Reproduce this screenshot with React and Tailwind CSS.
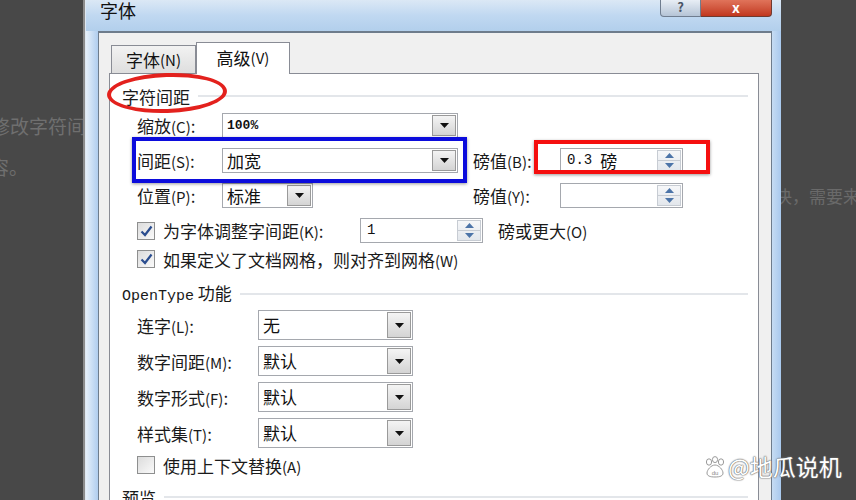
import React from "react";

const CJK = "font-['Noto_Sans_CJK_SC','Noto_Sans',sans-serif]";
const MONO = "font-['Liberation_Mono','DejaVu_Sans_Mono',monospace]";

function DropBtn() {
  return (
    <div className="w-[24px] self-stretch m-px flex items-center justify-center border border-[#9a9a9a] bg-gradient-to-b from-[#f4f4f4] to-[#d4d4d4]">
      <svg width="9" height="5" viewBox="0 0 9 5">
        <path d="M0 0 L9 0 L4.5 5 Z" fill="#111" />
      </svg>
    </div>
  );
}

function Combo({ w, h = 25, text, mono }) {
  return (
    <div className="flex items-stretch bg-white border border-[#a5a8ae] shrink-0" style={{ width: w, height: h }}>
      <div className={`flex-1 flex items-center pl-[4px] text-[#111] ${mono ? MONO + " text-[13px] font-bold" : "text-[17px]"}`}>
        {text}
      </div>
      <DropBtn />
    </div>
  );
}

function SpinBtn() {
  return (
    <div className="w-[24px] self-stretch m-px flex flex-col border border-[#c7ccd3] bg-gradient-to-b from-[#f6f7f9] to-[#e3e7ec]">
      <div className="flex-1 flex items-center justify-center border-b border-[#c7ccd3]">
        <svg width="9" height="5" viewBox="0 0 9 5">
          <path d="M0 5 L9 5 L4.5 0 Z" fill="#4c74a8" />
        </svg>
      </div>
      <div className="flex-1 flex items-center justify-center">
        <svg width="9" height="5" viewBox="0 0 9 5">
          <path d="M0 0 L9 0 L4.5 5 Z" fill="#4c74a8" />
        </svg>
      </div>
    </div>
  );
}

function Spin({ w = 123, h = 25, children }) {
  return (
    <div className="flex items-stretch bg-white border border-[#a5a8ae] shrink-0" style={{ width: w, height: h }}>
      <div className="flex-1 flex items-center pl-[6px] text-[15px] text-[#111]">{children}</div>
      <SpinBtn />
    </div>
  );
}

function Check({ checked }) {
  return (
    <div className="w-[18px] h-[18px] shrink-0 border border-[#8e8f8f] bg-gradient-to-br from-[#dcdcdc] to-[#fafafa] flex items-center justify-center">
      {checked && (
        <svg width="13" height="12" viewBox="0 0 13 12">
          <path d="M1.5 6.5 L5 10 L11.5 1.5" stroke="#2a4d8f" strokeWidth="2.2" fill="none" />
        </svg>
      )}
    </div>
  );
}

function Label({ children, w }) {
  return (
    <div className="text-[17px] text-[#1a1a1a] whitespace-nowrap shrink-0 leading-none" style={{ width: w }}>
      {children}
    </div>
  );
}

function Key({ k }) {
  return <span className="text-[15px]">({k})</span>;
}

function Header({ children, mt }) {
  return (
    <div className="flex items-center h-[20px] pl-[12px] pr-[10px]" style={{ marginTop: mt }}>
      <div className="text-[17px] text-[#1a1a1a] whitespace-nowrap leading-none">{children}</div>
      <div className="flex-1 h-[2px] bg-[#e3e6ea] ml-[8px]" />
    </div>
  );
}

export default function App() {
  return (
    <div className={`relative w-[856px] h-[500px] overflow-hidden flex bg-[#484848] ${CJK}`}>
      {/* left background document */}
      <div className="w-[83px] shrink-0 overflow-hidden flex flex-col pt-[116px] text-[19px] text-[#6f6f6f] leading-none">
        <div className="-ml-[9px] whitespace-nowrap">修改字符间</div>
        <div className="-ml-[10px] mt-[22px] whitespace-nowrap">容。</div>
      </div>
      <div className="w-[2px] shrink-0 bg-[#8c8c8c]" />
      <div className="w-[1px] shrink-0 bg-[#dfe8f1]" />

      {/* dialog */}
      <div className="w-[695px] shrink-0 flex flex-col bg-gradient-to-b from-[#cfe2f5] to-[#b8d4ef]">
        {/* title bar */}
        <div className="h-[31px] shrink-0 flex items-start bg-gradient-to-b from-[#dbe8f5] via-[#c0d8f1] to-[#b2cfec]">
          <div className="pl-[14px] pt-[1px] text-[18px] text-[#111] leading-none">字体</div>
          <div className="flex-1" />
          <div className="w-[41px] h-[17px] border border-t-0 border-[#6f7d8f] rounded-bl-[4px] bg-gradient-to-b from-[#e8eef5] to-[#b5c4d6] flex items-start justify-center text-[13px] leading-none text-[#4a5566] font-bold">?</div>
          <div className="w-[71px] h-[17px] border border-t-0 border-l-0 border-[#6f3a30] rounded-br-[4px] bg-gradient-to-b from-[#e0735a] to-[#c1371e] flex items-start justify-center text-[14px] leading-none text-white font-bold mr-[9px]">x</div>
        </div>
        {/* body */}
        <div className="flex-1 flex min-h-0">
          <div className="w-[12px] shrink-0 bg-gradient-to-r from-[#e6f0fa] to-[#b0cdee]" />
          <div className="flex-1 flex flex-col bg-[#f0f0f0] border-l border-t-2 border-r border-[#6e7c8c] pl-[10px] pr-[12px] pt-[9px]">
            {/* tabs */}
            <div className="h-[31px] shrink-0 flex items-end pl-[2px]">
              <div className="w-[85px] h-[28px] border border-b-0 border-[#898c95] bg-gradient-to-b from-[#f2f2f2] to-[#dedede] flex items-center justify-center text-[17px] text-[#111] leading-none">
                字体<Key k="N" />
              </div>
              <div className="w-[94px] h-[32px] -mb-px relative z-10 border border-b-0 border-[#898c95] bg-white flex items-center justify-center text-[17px] text-[#111] leading-none pb-[2px]">
                高级<Key k="V" />
              </div>
            </div>
            {/* panel */}
            <div className="flex-1 flex flex-col bg-white border border-[#898c95] border-b-0">
              <Header mt="12px">字符间距</Header>

              <div className="flex flex-col pl-[27px]">
                <div className="h-[25px] mt-[7px] flex items-center">
                  <Label w={85}>缩放<Key k="C" />:</Label>
                  <Combo w={236} text="100%" mono />
                </div>
                <div className="h-[25px] mt-[10px] flex items-center">
                  <Label w={85}>间距<Key k="S" />:</Label>
                  <Combo w={236} text="加宽" />
                  <div className="ml-[15px]">
                    <Label w={87}>磅值<Key k="B" />:</Label>
                  </div>
                  <Spin>
                    <span className={`${MONO} text-[14px]`}>0.3</span>
                    <span className="ml-[8px] text-[17px]">磅</span>
                  </Spin>
                </div>
                <div className="h-[25px] mt-[10px] flex items-center">
                  <Label w={85}>位置<Key k="P" />:</Label>
                  <Combo w={91} text="标准" />
                  <div className="ml-[160px]">
                    <Label w={87}>磅值<Key k="Y" />:</Label>
                  </div>
                  <Spin />
                </div>
                <div className="h-[25px] mt-[10px] flex items-center">
                  <Check checked />
                  <div className="ml-[8px]">
                    <Label w={197}>为字体调整字间距<Key k="K" />:</Label>
                  </div>
                  <Spin>
                    <span className={`${MONO} text-[14px]`}>1</span>
                  </Spin>
                  <div className="ml-[15px]">
                    <Label>磅或更大<Key k="O" /></Label>
                  </div>
                </div>
                <div className="h-[22px] mt-[5px] flex items-center">
                  <Check checked />
                  <div className="ml-[8px]">
                    <Label>如果定义了文档网格，则对齐到网格<Key k="W" /></Label>
                  </div>
                </div>
              </div>

              <Header mt="14px">
                <span className={`${MONO} text-[15px]`}>OpenType</span> 功能
              </Header>

              <div className="flex flex-col pl-[27px]">
                {[
                  ["连字", "L", "无"],
                  ["数字间距", "M", "默认"],
                  ["数字形式", "F", "默认"],
                  ["样式集", "T", "默认"],
                ].map(([l, k, v]) => (
                  <div key={k} className="h-[30px] mt-[6px] flex items-center">
                    <Label w={121}>
                      {l}
                      <Key k={k} />:
                    </Label>
                    <Combo w={155} h={30} text={v} />
                  </div>
                ))}
                <div className="h-[22px] mt-[6px] flex items-center">
                  <Check />
                  <div className="ml-[8px]">
                    <Label>使用上下文替换<Key k="A" /></Label>
                  </div>
                </div>
              </div>

              <Header mt="11px">预览</Header>
            </div>
          </div>
          <div className="w-[9px] shrink-0 bg-gradient-to-r from-[#c6dcf3] to-[#a9c9ee]" />
        </div>
      </div>

      {/* right background document */}
      <div className="flex-1 overflow-hidden pt-[187px] text-[17px] text-[#6a6a6a] leading-none">
        <div className="-ml-[6px] whitespace-nowrap">决，需要来</div>
      </div>

      {/* annotations */}
      <div className="absolute left-[107px] top-[73px] w-[120px] h-[40px] rounded-[50%] border-[4px] border-[#e3211d] -rotate-2" />
      <div className="absolute left-[132px] top-[137px] w-[335px] h-[46px] border-[4px] border-[#0c0cdc] shadow-[0_1px_3px_rgba(0,0,0,0.4)]" />
      <div className="absolute left-[534px] top-[140px] w-[176px] h-[34px] border-[4px] border-[#f50f0f] shadow-[0_1px_3px_rgba(0,0,0,0.4)]" />

      {/* watermark */}
      <div className="absolute left-[704px] top-[455px] flex items-center">
        <svg width="22" height="22" viewBox="0 0 22 22">
          <g fill="#fff" stroke="#9a9a9a" strokeWidth="1">
            <ellipse cx="5" cy="6" rx="2.6" ry="3.2" />
            <ellipse cx="11" cy="3.6" rx="2.6" ry="3" />
            <ellipse cx="17" cy="6" rx="2.6" ry="3.2" />
            <path d="M11 9 C7 9 3 14 3 17 C3 20 6 21 11 21 C16 21 19 20 19 17 C19 14 15 9 11 9 Z" />
          </g>
          <text x="11" y="18.5" textAnchor="middle" fontSize="6" fill="#888" fontFamily="Liberation Sans, sans-serif">du</text>
        </svg>
        <div className="ml-[2px] text-[23px] text-white leading-none [text-shadow:0_0_1px_#666,0_0_1px_#666,0_0_2px_#888]">@地瓜说机</div>
      </div>
    </div>
  );
}
